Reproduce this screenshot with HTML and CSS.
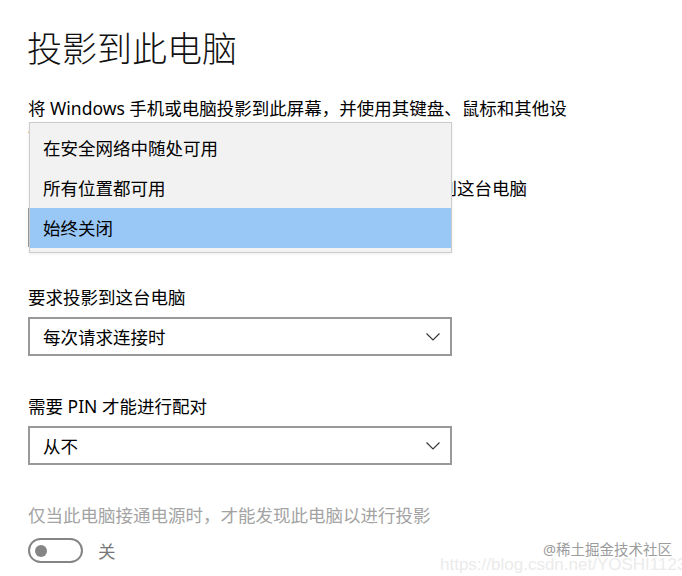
FILE: index.html
```html
<!DOCTYPE html>
<html lang="zh-CN">
<head>
    <meta charset="UTF-8" />
    <meta name="viewport" content="width=device-width, initial-scale=1.0" />
    <title>投影到此电脑</title>
    <link rel="stylesheet" href="styles.css">
</head>
<body>

<div class="page">
    <h1>投影到此电脑</h1>
    <p class="intro">将 Windows 手机或电脑投影到此屏幕，并使用其键盘、鼠标和其他设备。</p>

    <div class="field">
        <div class="label label-wide">当你同意时，某些 Windows 和 Android 设备可投影到这台电脑</div>
        <div class="combo">
            <div class="select">
                <span>始终关闭</span>
                <svg class="chevron" width="14" height="8" viewBox="0 0 14 8"><polyline points="0.5,0.5 7,7 13.5,0.5" fill="none" stroke="#333" stroke-width="1.1"/></svg>
            </div>
            <ul class="menu">
                <li>在安全网络中随处可用</li>
                <li>所有位置都可用</li>
                <li class="selected">始终关闭</li>
            </ul>
        </div>
    </div>

    <div class="field">
        <div class="label">要求投影到这台电脑</div>
        <div class="select">
            <span>每次请求连接时</span>
            <svg class="chevron" width="14" height="8" viewBox="0 0 14 8"><polyline points="0.5,0.5 7,7 13.5,0.5" fill="none" stroke="#333" stroke-width="1.1"/></svg>
        </div>
    </div>

    <div class="field">
        <div class="label">需要 PIN 才能进行配对</div>
        <div class="select">
            <span>从不</span>
            <svg class="chevron" width="14" height="8" viewBox="0 0 14 8"><polyline points="0.5,0.5 7,7 13.5,0.5" fill="none" stroke="#333" stroke-width="1.1"/></svg>
        </div>
    </div>

    <div class="label disabled">仅当此电脑接通电源时，才能发现此电脑以进行投影</div>
    <div class="toggle-row">
        <div class="toggle"><div class="knob"></div></div>
        <span class="toggle-text">关</span>
    </div>
</div>

<div class="watermark">
    <span class="wm-url">https://blog.csdn.net/YOSHI1123zju</span>
    <span class="wm-brand">@稀土掘金技术社区</span>
</div>

</body>
</html>
```

FILE: styles.css
```css
body {
    margin: 0;
    font-family: 'Noto Sans', 'Noto Sans CJK SC', sans-serif;
    background-color: #fff;
    color: #000;
    width: 682px;
    height: 576px;
    overflow: hidden;
    position: relative;
}

.page {
    padding: 27px 0 0 27px;
}

h1 {
    margin: 0;
    font-size: 35px;
    font-weight: 300;
    line-height: 44px;
    color: #111;
}

.intro {
    width: 550px;
    margin: 25px 0 32px 1px;
    font-size: 17.5px;
    line-height: 24px;
}

.label {
    margin-left: 1px;
    font-size: 17.5px;
    line-height: 24px;
    white-space: nowrap;
}

.label-wide {
    word-spacing: 2px;
}

.field {
    margin-left: 1px;
    margin-bottom: 38px;
}

.field .label {
    margin-left: 0;
    margin-bottom: 8px;
}

.combo {
    position: relative;
}

.select {
    box-sizing: border-box;
    width: 424px;
    height: 39px;
    border: 2px solid #999;
    padding: 0 10px 0 13px;
    display: flex;
    align-items: center;
    justify-content: space-between;
    font-size: 17.5px;
}

.chevron {
    display: block;
}

.menu {
    position: absolute;
    top: -86px;
    left: 1px;
    box-sizing: border-box;
    width: 423px;
    margin: 0;
    padding: 5px 0 4px;
    list-style: none;
    background: #f2f2f2;
    border: 1px solid #ccc;
    box-shadow: 0 1px 3px rgba(0,0,0,0.08);
}

.menu li {
    height: 40px;
    line-height: 40px;
    padding-left: 13px;
    font-size: 17.5px;
}

.menu li.selected {
    background: #99c8f7;
}

.disabled {
    color: #a3a3a3;
}

.toggle-row {
    margin: 11px 0 0 1px;
    display: flex;
    align-items: center;
    gap: 15px;
}

.toggle {
    box-sizing: border-box;
    width: 55px;
    height: 25px;
    border: 2px solid #858585;
    border-radius: 13px;
    display: flex;
    align-items: center;
    padding-left: 5px;
}

.knob {
    width: 12px;
    height: 12px;
    border-radius: 50%;
    background: #858585;
}

.toggle-text {
    font-size: 17.5px;
    color: #777;
}

.watermark {
    position: absolute;
    right: 0;
    bottom: 0;
    width: 250px;
    height: 40px;
    overflow: hidden;
}

.wm-url {
    position: absolute;
    left: 8px;
    top: 19px;
    font-family: 'Liberation Sans', sans-serif;
    font-size: 17px;
    color: #ebebeb;
    white-space: nowrap;
}

.wm-brand {
    position: absolute;
    right: 10px;
    top: 2px;
    font-size: 14.5px;
    color: #9c9c9c;
    white-space: nowrap;
}
```
